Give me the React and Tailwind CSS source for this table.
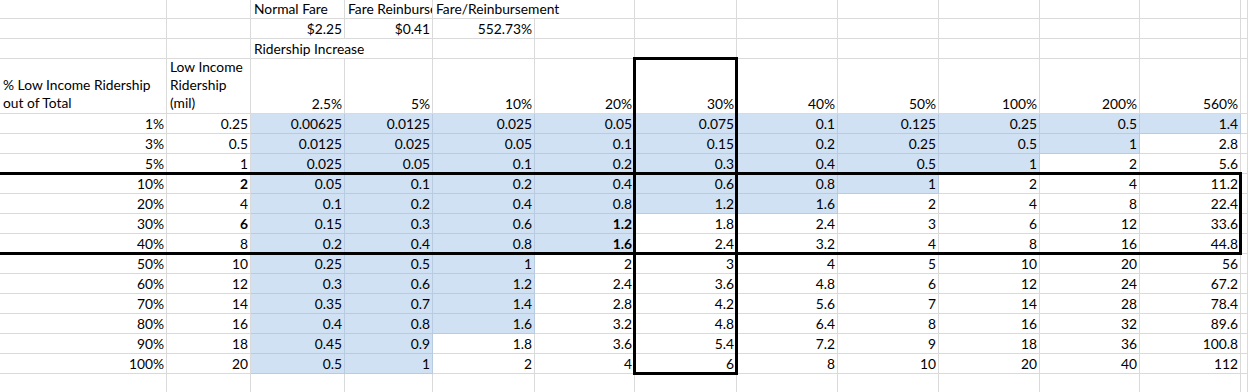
import React from "react";

const increases = ["2.5%", "5%", "10%", "20%", "30%", "40%", "50%", "100%", "200%", "560%"];
const rates = [0.025, 0.05, 0.1, 0.2, 0.3, 0.4, 0.5, 1, 2, 5.6];

// pct, ridership (mil), how many result columns are shaded, bold flags
const rows = [
  { pct: "1%", mil: 0.25, blue: 10 },
  { pct: "3%", mil: 0.5, blue: 9 },
  { pct: "5%", mil: 1, blue: 8 },
  { pct: "10%", mil: 2, blue: 7, boldMil: true },
  { pct: "20%", mil: 4, blue: 6 },
  { pct: "30%", mil: 6, blue: 4, boldMil: true, boldCol: 3 },
  { pct: "40%", mil: 8, blue: 4, boldCol: 3 },
  { pct: "50%", mil: 10, blue: 3 },
  { pct: "60%", mil: 12, blue: 3 },
  { pct: "70%", mil: 14, blue: 3 },
  { pct: "80%", mil: 16, blue: 3 },
  { pct: "90%", mil: 18, blue: 2 },
  { pct: "100%", mil: 20, blue: 2 },
];

const fmt = (n) => String(parseFloat(n.toFixed(6)));

const Cell = ({ children, right, blue, bold, noRight, clip, wrap }) => {
  let layout;
  if (wrap) layout = "flex-col justify-end pl-[3px] pb-[1px] leading-[18px]";
  else if (right) layout = "items-end justify-end pr-[2px] leading-[19px] whitespace-nowrap";
  else layout = "items-end justify-start pl-[3px] leading-[19px] whitespace-nowrap";
  return (
    <div
      className={`flex border-b ${noRight ? "" : "border-r"} ${
        blue ? "bg-[#cfe1f3] border-[#b8cbe0]" : "border-[#dadada]"
      } ${layout} ${clip ? "overflow-hidden" : ""} ${bold ? "font-bold" : ""}`}
    >
      {children}
    </div>
  );
};

const Empty = ({ noRight }) => <Cell noRight={noRight} />;

export default function App() {
  return (
    <div className="w-[1248px] h-[392px] overflow-hidden bg-white">
      <div className="relative mt-[-1px] font-[Lato,sans-serif] text-[13.8px] text-black">
        <div className="grid grid-cols-[167px_84px_94px_88px_102px_100px_102px_101px_101px_101px_100px_101px_7px] grid-rows-[20px_20px_20px_55px_repeat(14,20px)]">
          {/* row 1 */}
          <Empty />
          <Empty />
          <Cell>Normal Fare</Cell>
          <Cell clip>Fare Reinbursement</Cell>
          <Cell noRight>Fare/Reinbursement</Cell>
          {Array.from({ length: 8 }).map((_, i) => (
            <Empty key={i} />
          ))}

          {/* row 2 */}
          <Empty />
          <Empty />
          <Cell right>$2.25</Cell>
          <Cell right>$0.41</Cell>
          <Cell right>552.73%</Cell>
          {Array.from({ length: 8 }).map((_, i) => (
            <Empty key={i} />
          ))}

          {/* row 3 */}
          <Empty />
          <Empty />
          <Cell noRight>Ridership Increase</Cell>
          {Array.from({ length: 10 }).map((_, i) => (
            <Empty key={i} />
          ))}

          {/* row 4: column headers */}
          <Cell wrap>
            <span>% Low Income Ridership</span>
            <span>out of Total</span>
          </Cell>
          <Cell wrap>
            <span>Low Income</span>
            <span>Ridership</span>
            <span>(mil)</span>
          </Cell>
          {increases.map((h) => (
            <Cell key={h} right>
              {h}
            </Cell>
          ))}
          <Empty />

          {/* data */}
          {rows.map((r) => (
            <React.Fragment key={r.pct}>
              <Cell right>{r.pct}</Cell>
              <Cell right bold={r.boldMil}>
                {fmt(r.mil)}
              </Cell>
              {rates.map((rate, i) => (
                <Cell key={i} right blue={i < r.blue} bold={r.boldCol === i}>
                  {fmt(r.mil * rate)}
                </Cell>
              ))}
              <Empty />
            </React.Fragment>
          ))}

          {/* trailing empty row */}
          {Array.from({ length: 13 }).map((_, i) => (
            <Empty key={i} />
          ))}
        </div>

        {/* thick borders drawn over the grid */}
        <div className="absolute left-[-3px] top-[173px] w-[1245px] h-[83px] border-[3px] border-black pointer-events-none" />
        <div className="absolute left-[633px] top-[58px] w-[105px] h-[318px] border-[3px] border-black pointer-events-none" />
      </div>
    </div>
  );
}
